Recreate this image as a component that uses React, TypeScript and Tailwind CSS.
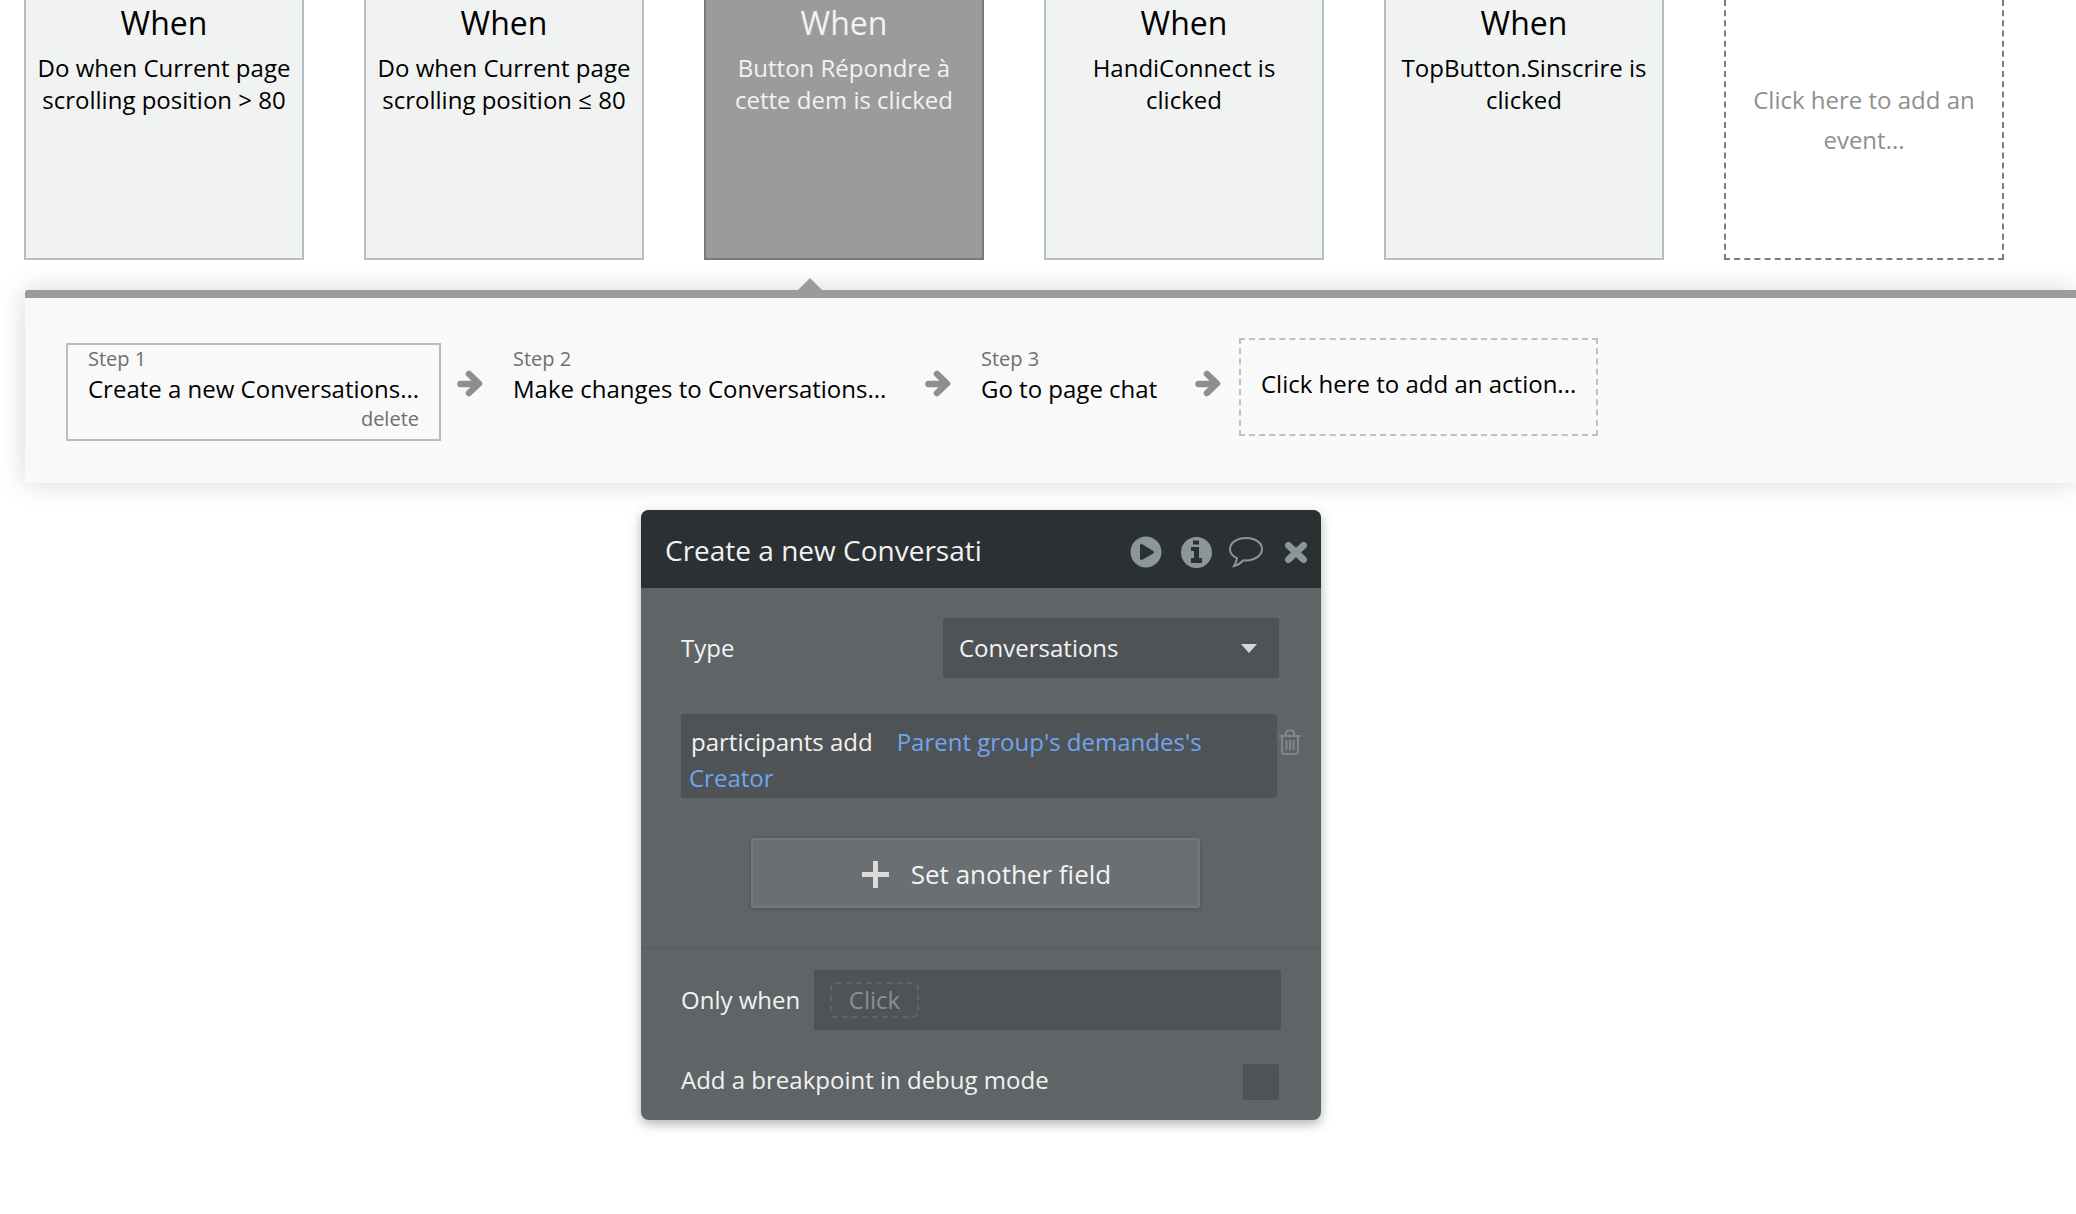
import { FaPlayCircle } from 'react-icons/fa';

const events = [
  { lines: ['Do when Current page', 'scrolling position > 80'] },
  { lines: ['Do when Current page', 'scrolling position ≤ 80'] },
  { lines: ['Button Répondre à', 'cette dem is clicked'], selected: true },
  { lines: ['HandiConnect is', 'clicked'] },
  { lines: ['TopButton.Sinscrire is', 'clicked'] },
];

const EventCard = ({ lines, selected }: { lines: string[]; selected?: boolean }) => (
  <div
    className={`w-[280px] h-[260px] shrink-0 border-2 border-t-0 text-center pt-[2px] ${
      selected ? 'bg-[#9b9b9b] border-[#7a7a7a] text-[#f2f2f2]' : 'bg-[#f1f3f2] border-[#b3bfc3] text-black'
    }`}
  >
    <div className="text-[32px] leading-[42px]">When</div>
    <div className="text-[24px] leading-[32px] mt-[8px]">
      {lines.map((line) => (
        <div key={line}>{line}</div>
      ))}
    </div>
  </div>
);

const StepArrow = () => (
  <svg viewBox="0 0 26 27" className="w-[26px] h-[27px] text-[#8e8e8e] shrink-0" fill="none" stroke="currentColor" strokeWidth="6.5">
    <path d="M3.500 14H20" strokeLinecap="round" />
    <path d="M12 4l10 9.500-10 9.500" strokeLinecap="round" strokeLinejoin="round" />
  </svg>
);

const Step = ({ n, title, className }: { n: number; title: string; className: string }) => (
  <div className={className}>
    <div className="text-[20px] leading-[24px] text-[#6f6f6f]">Step {n}</div>
    <div className="text-[24px] leading-[32px] text-black whitespace-nowrap mt-[2px]">{title}</div>
  </div>
);

const App = () => {
  return (
    <div
      className="w-[2076px] h-[1214px] overflow-hidden bg-white"
      style={{ fontFamily: '"Open Sans", sans-serif' }}
    >
      {/* Event cards */}
      <div className="flex gap-[60px] pl-6">
        {events.map((e) => (
          <EventCard key={e.lines[0] + e.lines[1]} lines={e.lines} selected={e.selected} />
        ))}
        <div className="w-[280px] h-[260px] shrink-0 border-2 border-t-0 border-dashed border-[#7d7d7d] text-center text-[24px] leading-[40px] text-[#8f8f8f] pt-[80px] px-4">
          Click here to add an event...
        </div>
      </div>

      {/* Actions panel */}
      <div className="relative ml-[25px] mt-[30px] w-[2051px] h-[193px] border-t-[8px] border-[#9b9b9b] rounded-tl-[3px] bg-[#f9f9f9] shadow-[0_0_28px_rgba(0,0,0,0.16)]">
        <div className="absolute left-[772px] top-[-20px] w-0 h-0 border-x-[13px] border-x-transparent border-b-[13px] border-b-[#9b9b9b]" />
        <div className="flex items-start pl-[41px] pt-[40px]">
          <div className="w-[375px] h-[98px] border-2 border-[#b3bfc3] px-[20px] mt-[5px] shrink-0">
            <div className="text-[20px] leading-[24px] text-[#6f6f6f] mt-[2px]">Step 1</div>
            <div className="text-[24px] leading-[32px] text-black whitespace-nowrap mt-[2px]">Create a new Conversations...</div>
            <div className="text-[20px] leading-[24px] text-[#6f6f6f] text-right mt-[2px]">delete</div>
          </div>
          <div className="mt-[32px] ml-[16px]">
            <StepArrow />
          </div>
          <Step n={2} title="Make changes to Conversations..." className="ml-[30px] mt-[9px] w-[412px] shrink-0" />
          <div className="mt-[32px]">
            <StepArrow />
          </div>
          <Step n={3} title="Go to page chat" className="ml-[30px] mt-[9px] w-[214px] shrink-0" />
          <div className="mt-[32px]">
            <StepArrow />
          </div>
          <div className="ml-[18px] w-[359px] h-[98px] border-2 border-dashed border-[#b9c2c5] text-[24px] text-black flex items-center pl-[20px] pb-[6px] shrink-0">
            Click here to add an action...
          </div>
        </div>
      </div>

      {/* Action editor */}
      <div className="ml-[641px] mt-[27px] w-[680px] h-[610px] rounded-[8px] bg-[#5f6467] text-white shadow-[0_4px_12px_rgba(0,0,0,0.3)] overflow-hidden">
        <div className="h-[78px] bg-[#2b3033] flex items-center pl-[24px] pr-[13px]">
          <div className="flex-1 text-[28px] text-[#f2f2f2] pt-[2px]">Create a new Conversati</div>
          <div className="flex items-center pt-[6px] text-[#8a9699]">
            <FaPlayCircle className="w-[32px] h-[32px]" />
            <svg viewBox="0 0 31 31" className="w-[31px] h-[31px] ml-[19px]">
              <circle cx="15.500" cy="15.500" r="15.500" fill="currentColor" />
              <path d="M12 3.500h6v4h-6zM10 10h8v11h3v5H10v-5h3v-7h-3z" fill="#2b3033" />
            </svg>
            <svg viewBox="0 0 36 32" className="w-[36px] h-[32px] ml-[16px]" fill="none" stroke="currentColor" strokeWidth="2">
              <path d="M18 2C9 2 2 6.800 2 13c0 4 2.800 7.300 7 9.200-.4 2.800-1.400 5.300-3 7.800 3.500-.8 7-3.200 9.500-5.800 1 .1 1.700.2 2.500.2 9 0 16-5 16-11.400S27 2 18 2z" />
            </svg>
            <svg viewBox="0 0 24 23" className="w-[24px] h-[23px] ml-[20px]" fill="none" stroke="currentColor" strokeWidth="7" strokeLinecap="round">
              <path d="M4.500 4.500l15 14M19.500 4.500l-15 14" />
            </svg>
          </div>
        </div>

        <div className="flex items-center h-[60px] mt-[30px] pl-[40px] pr-[42px]">
          <div className="flex-1 text-[24px] text-[#f2f2f2]">Type</div>
          <div className="w-[336px] h-[60px] bg-[#505356] rounded-[2px] flex items-center justify-between pl-[16px] pr-[22px] text-[24px] text-[#f2f2f2]">
            Conversations
            <span className="w-0 h-0 border-x-[8px] border-x-transparent border-t-[9px] border-t-[#d5d8da]" />
          </div>
        </div>

        <div className="flex mt-[36px] ml-[40px]">
          <div className="w-[596px] h-[84px] bg-[#505356] rounded-[2px] text-[24px] leading-[36px] pl-[8px] pt-[10px] text-[#f2f2f2]">
            <span className="ml-[2px] mr-[24px]">participants add</span>
            <span className="text-[#6ea6ec]">Parent group's demandes's Creator</span>
          </div>
          <svg viewBox="0 0 22 26" className="w-[22px] h-[26px] ml-[2px] mt-[15px] text-[#80878a]" fill="none" stroke="currentColor" strokeWidth="2">
            <path d="M0 7h22M7 7V4c0-1.500 1-2.500 2.500-2.500h3C14 1.500 15 2.500 15 4v3" />
            <path d="M3 7v15.500C3 24 4 25 5.500 25h11c1.500 0 2.500-1 2.500-2.500V7" />
            <path d="M7.500 11v10M11 11v10M14.500 11v10" />
          </svg>
        </div>

        <div className="w-[449px] h-[70px] ml-[110px] mt-[40px] bg-[#6b6f72] border-2 border-[#74787b] rounded-[3px] shadow-[0_1px_4px_rgba(0,0,0,0.2)] flex items-center justify-center gap-[22px] text-[26px] text-[#f2f2f2] pl-[22px] pt-[3px]">
          <span className="relative w-[27px] h-[27px]">
            <span className="absolute left-[11px] top-0 w-[5px] h-[27px] bg-[#dcdcdc]" />
            <span className="absolute left-0 top-[11px] w-[27px] h-[5px] bg-[#dcdcdc]" />
          </span>
          Set another field
        </div>

        <div className="h-[1px] bg-[#565a5d] mt-[40px]" />

        <div className="flex items-center h-[60px] mt-[21px] pl-[40px] pr-[40px] text-[24px] text-[#f2f2f2]">
          <div className="flex-1">Only when</div>
          <div className="w-[467px] h-[60px] bg-[#505356] flex items-center pl-[16px]">
            <div className="w-[89px] h-[36px] border-2 border-dashed border-[#5f6467] rounded-[6px] text-[#8b8e90] flex items-center justify-center">
              Click
            </div>
          </div>
        </div>

        <div className="flex items-center justify-between mt-[34px] pl-[40px] pr-[42px] text-[24px] text-[#f2f2f2]">
          <span className="mt-[-4px]">Add a breakpoint in debug mode</span>
          <div className="w-[36px] h-[36px] bg-[#505356] rounded-[2px]" />
        </div>
      </div>
    </div>
  );
};

export default App;
